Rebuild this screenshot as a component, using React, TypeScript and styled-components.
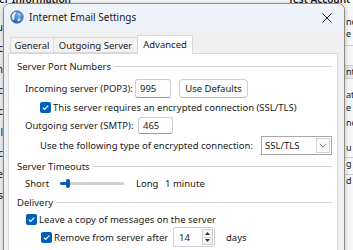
import React from "react";
import styled, { createGlobalStyle } from "styled-components";

const Global = createGlobalStyle`
  html, body { margin: 0; padding: 0; }
  body { width: 353px; height: 250px; overflow: hidden; background: #ffffff; }
  #root { width: 353px; height: 250px; }
  * { box-sizing: border-box; }
`;

const Desktop = styled.div`
  position: relative;
  width: 353px;
  height: 250px;
  overflow: hidden;
  background: #ffffff;
  font-family: "Noto Sans", "Open Sans", sans-serif;
  font-size: 9.5px;
  color: #1a1a1a;
`;

/* ---------- background window ---------- */
const BackWindow = styled.div`
  display: grid;
  grid-template-columns: 3px 1fr 8px;
  grid-template-rows: 4px 1fr;
  width: 100%;
  height: 100%;
`;

const BackHeader = styled.div`
  grid-column: 1 / -1;
  display: flex;
  align-items: flex-end;
  height: 4px;
  overflow: hidden;
  background: #ffffff;
`;

const BackTitle = styled.div<{ $w?: number; $right?: boolean }>`
  font-size: 10px;
  line-height: 10px;
  font-weight: 600;
  white-space: nowrap;
  overflow: hidden;
  flex: none;
  width: ${(p) => (p.$w ? `${p.$w}px` : "auto")};
  margin-left: ${(p) => (p.$right ? "auto" : "-1px")};
`;

const BackLeft = styled.div`
  display: flex;
  flex-direction: column;
  overflow: hidden;
  background: #f2f2f2;
  padding-top: 12px;
`;

const BackLeftWord = styled.div`
  display: flex;
  justify-content: flex-end;
  height: 21px;
  align-items: center;
  white-space: nowrap;
  font-size: 10px;
`;

const BackCenter = styled.div`
  background: #ffffff;
`;

const BackRight = styled.div`
  display: flex;
  flex-direction: column;
  overflow: hidden;
  background: #f7f7f7;
`;

const BackRightRow = styled.div<{ $h: number; $bg?: string; $line?: boolean }>`
  height: ${(p) => p.$h}px;
  flex: none;
  display: flex;
  align-items: center;
  padding-left: 1px;
  white-space: nowrap;
  font-size: 9px;
  line-height: 10px;
  overflow: hidden;
  background: ${(p) => p.$bg || "transparent"};
  border-top: ${(p) => (p.$line ? "1px solid #cfcfcf" : "none")};
`;

/* ---------- dialog ---------- */
const Dialog = styled.div`
  position: absolute;
  left: 3px;
  top: 3px;
  width: 342px;
  height: 262px;
  display: flex;
  flex-direction: column;
  background: #f0f0f0;
  border: 1px solid #8c8c8c;
  border-radius: 7px 7px 0 0;
  box-shadow: 0 0 5px rgba(0, 0, 0, 0.25);
  overflow: hidden;
`;

const TitleBar = styled.div`
  height: 26px;
  flex: none;
  display: flex;
  align-items: center;
  padding-left: 6px;
  background: #eef3f9;
`;

const TitleText = styled.div`
  margin-left: 5px;
  font-size: 10px;
  color: #1a1a1a;
  flex: 1;
`;

const CloseBox = styled.div`
  width: 30px;
  height: 26px;
  display: flex;
  align-items: center;
  justify-content: center;
  margin-right: 2px;
  margin-top: 1px;
`;

const Body = styled.div`
  flex: 1;
  display: flex;
  flex-direction: column;
  padding: 0 6px 0 4px;
`;

const TabRow = styled.div`
  height: 23px;
  flex: none;
  display: flex;
  align-items: flex-end;
  padding-left: 2px;
  position: relative;
  z-index: 1;
`;

const Tab = styled.div<{ $w: number; $active?: boolean }>`
  width: ${(p) => p.$w}px;
  height: ${(p) => (p.$active ? 19 : 16)}px;
  margin-bottom: ${(p) => (p.$active ? -1 : 0)}px;
  display: flex;
  align-items: center;
  justify-content: center;
  background: ${(p) => (p.$active ? "#ffffff" : "#f3f3f3")};
  border: 1px solid #d9d9d9;
  border-bottom: ${(p) => (p.$active ? "none" : "1px solid #d9d9d9")};
  margin-right: -1px;
  white-space: nowrap;
  padding-bottom: ${(p) => (p.$active ? 1 : 0)}px;
`;

const Panel = styled.div`
  flex: 1;
  display: flex;
  flex-direction: column;
  background: #ffffff;
  border: 1px solid #d9d9d9;
  padding: 5px 5px 0 8px;
`;

const GroupHeader = styled.div<{ $mt: number }>`
  display: flex;
  align-items: center;
  height: 14px;
  margin-top: ${(p) => p.$mt}px;
  white-space: nowrap;
`;

const GroupLine = styled.div`
  flex: 1;
  height: 1px;
  margin-left: 3px;
  background: #d3d3d3;
`;

const Row = styled.div<{ $indent: number; $h: number; $mt: number }>`
  display: flex;
  align-items: center;
  height: ${(p) => p.$h}px;
  margin-top: ${(p) => p.$mt}px;
  padding-left: ${(p) => p.$indent}px;
  white-space: nowrap;
  flex: none;
`;

const Label = styled.span<{ $w?: number; $ml?: number }>`
  flex: none;
  width: ${(p) => (p.$w ? `${p.$w}px` : "auto")};
  margin-left: ${(p) => p.$ml || 0}px;
`;

const TextBox = styled.div<{ $w: number; $h: number }>`
  flex: none;
  width: ${(p) => p.$w}px;
  height: ${(p) => p.$h}px;
  display: flex;
  align-items: center;
  padding-left: 4px;
  background: #ffffff;
  border: 1px solid #cdcdcd;
  border-bottom-color: #9a9a9a;
  border-radius: 3px;
`;

const Button = styled.div`
  flex: none;
  width: 69px;
  height: 19px;
  margin-left: 8px;
  display: flex;
  align-items: center;
  justify-content: center;
  background: #fdfdfd;
  border: 1px solid #d0d0d0;
  border-bottom-color: #bdbdbd;
  border-radius: 4px;
`;

const CheckBox = styled.div`
  flex: none;
  width: 11px;
  height: 11px;
  margin-right: 2px;
  border-radius: 2px;
  background: #005fb8;
  display: flex;
  align-items: center;
  justify-content: center;
`;

const Select = styled.div`
  flex: none;
  width: 71px;
  height: 19px;
  margin-left: auto;
  display: flex;
  align-items: center;
  padding: 0 1px 0 3px;
  background: #ffffff;
  border: 1px solid #a8a8a8;
`;

const SelectText = styled.span`
  flex: 1;
`;

const DropButton = styled.div`
  width: 14px;
  height: 15px;
  display: flex;
  align-items: center;
  justify-content: center;
  border: 1px solid #d4d4d4;
  background: #fafafa;
`;

const SliderTrack = styled.div`
  flex: none;
  width: 64px;
  height: 3px;
  border-radius: 2px;
  background: #d0d0d0;
  display: flex;
  align-items: center;
`;

const SliderFill = styled.div`
  width: 6px;
  height: 3px;
  border-radius: 2px 0 0 2px;
  background: #005fb8;
`;

const SliderThumb = styled.div`
  width: 4px;
  height: 9px;
  border-radius: 2px;
  background: #005fb8;
`;

const SpinBox = styled.div`
  flex: none;
  width: 42px;
  height: 20px;
  display: flex;
  align-items: center;
  padding: 0 1px 0 5px;
  background: #ffffff;
  border: 1px solid #d0d0d0;
  border-radius: 2px;
`;

const SpinValue = styled.span`
  flex: 1;
`;

const SpinButtons = styled.div`
  width: 11px;
  height: 16px;
  display: flex;
  flex-direction: column;
  border: 1px solid #cfcfcf;
  background: #f4f4f4;
`;

const SpinHalf = styled.div<{ $top?: boolean }>`
  flex: 1;
  display: flex;
  align-items: center;
  justify-content: center;
  border-top: ${(p) => (p.$top ? "none" : "1px solid #d8d8d8")};
`;

const Check = () => (
  <svg width="9" height="9" viewBox="0 0 9 9">
    <polyline points="1.8,4.6 3.6,6.4 7.3,2.6" fill="none" stroke="#ffffff" strokeWidth="1.2" />
  </svg>
);

const GlobeIcon = () => (
  <svg width="14" height="14" viewBox="0 0 14 14">
    <defs>
      <radialGradient id="g" cx="0.65" cy="0.35" r="0.7">
        <stop offset="0" stopColor="#6fb6ee" />
        <stop offset="1" stopColor="#1b5fae" />
      </radialGradient>
    </defs>
    <circle cx="7" cy="7" r="6.3" fill="url(#g)" stroke="#3f6f9f" strokeWidth="0.6" />
    <path d="M2.2 4.2 C3.4 2.6 5.2 1.8 6.6 2.2 C6 3.4 5.2 4 4.6 5.4 C4.2 6.6 4.8 8 4.2 9.6 C3.6 10.4 2.6 9.6 2 8.4 C1.4 7 1.6 5.4 2.2 4.2 Z" fill="#e9eef3" />
    <path d="M8.4 3.2 C9.4 3.4 10.2 4.2 10 5.2 C9.4 5.6 8.6 5 8.2 4.4 Z" fill="#d6e4ef" />
    <path d="M8.2 8.4 C9.2 8.2 10.6 8.6 10.8 9.6 C10 10.8 8.8 11.6 7.8 11.4 C7.6 10.4 7.6 9.2 8.2 8.4 Z" fill="#cfdeea" />
  </svg>
);

const CloseIcon = () => (
  <svg width="10" height="10" viewBox="0 0 10 10">
    <path d="M0.5 0.5 L9.5 9.5 M9.5 0.5 L0.5 9.5" stroke="#1f1f1f" strokeWidth="1" />
  </svg>
);

const Chevron = () => (
  <svg width="8" height="5" viewBox="0 0 8 5">
    <polyline points="0.8,0.8 4,4 7.2,0.8" fill="none" stroke="#707070" strokeWidth="0.9" />
  </svg>
);

const Arrow = ({ up }: { up?: boolean }) => (
  <svg width="5" height="3" viewBox="0 0 5 3">
    <polygon points={up ? "0,3 2.5,0 5,3" : "0,0 2.5,3 5,0"} fill="#333333" />
  </svg>
);

const leftWords = ["Nu", "Ac", "Un", "Ac", "Ac", "Ul", "Ac", "Re", "Os"];

const rightRows: { h: number; t?: string; bg?: string; line?: boolean }[] = [
  { h: 12 },
  { h: 12, t: "ne" },
  { h: 11, t: "e" },
  { h: 6 },
  { h: 20, line: true },
  { h: 13, t: "nt", bg: "#e6e6e6", line: true },
  { h: 10, line: true },
  { h: 13, t: "at" },
  { h: 13, t: "e" },
  { h: 3 },
  { h: 12, t: "ne" },
  { h: 13 },
  { h: 12, t: "u" },
  { h: 3 },
  { h: 12, t: "g", line: true },
  { h: 5 },
  { h: 12, t: "d", line: true },
];

export default function App() {
  return (
    <>
      <Global />
      <Desktop>
        <BackWindow>
          <BackHeader>
            <BackTitle>er Information</BackTitle>
            <BackTitle $right $w={65}>
              Test Account S
            </BackTitle>
          </BackHeader>
          <BackLeft>
            {leftWords.map((w, i) => (
              <BackLeftWord key={i}>{w}</BackLeftWord>
            ))}
          </BackLeft>
          <BackCenter />
          <BackRight>
            {rightRows.map((r, i) => (
              <BackRightRow key={i} $h={r.h} $bg={r.bg} $line={r.line}>
                {r.t}
              </BackRightRow>
            ))}
          </BackRight>
        </BackWindow>

        <Dialog>
          <TitleBar>
            <GlobeIcon />
            <TitleText>Internet Email Settings</TitleText>
            <CloseBox>
              <CloseIcon />
            </CloseBox>
          </TitleBar>
          <Body>
            <TabRow>
              <Tab $w={44}>General</Tab>
              <Tab $w={85}>Outgoing Server</Tab>
              <Tab $w={56} $active>
                Advanced
              </Tab>
            </TabRow>
            <Panel>
              <GroupHeader $mt={0}>
                Server Port Numbers
                <GroupLine />
              </GroupHeader>
              <Row $indent={8} $h={20} $mt={5}>
                <Label $w={110}>Incoming server (POP3):</Label>
                <TextBox $w={36} $h={19}>995</TextBox>
                <Button>Use Defaults</Button>
              </Row>
              <Row $indent={23} $h={12} $mt={3}>
                <CheckBox>
                  <Check />
                </CheckBox>
                <Label>This server requires an encrypted connection (SSL/TLS)</Label>
              </Row>
              <Row $indent={8} $h={18} $mt={3}>
                <Label $w={113}>Outgoing server (SMTP):</Label>
                <TextBox $w={35} $h={17}>465</TextBox>
              </Row>
              <Row $indent={23} $h={19} $mt={2}>
                <Label>Use the following type of encrypted connection:</Label>
                <Select>
                  <SelectText>SSL/TLS</SelectText>
                  <DropButton>
                    <Chevron />
                  </DropButton>
                </Select>
              </Row>
              <GroupHeader $mt={4}>
                Server Timeouts
                <GroupLine />
              </GroupHeader>
              <Row $indent={8} $h={14} $mt={3}>
                <Label $w={35}>Short</Label>
                <SliderTrack>
                  <SliderFill />
                  <SliderThumb />
                </SliderTrack>
                <Label $w={29} $ml={12}>
                  Long
                </Label>
                <Label>1 minute</Label>
              </Row>
              <GroupHeader $mt={5}>
                Delivery
                <GroupLine />
              </GroupHeader>
              <Row $indent={9} $h={14} $mt={3}>
                <CheckBox>
                  <Check />
                </CheckBox>
                <Label>Leave a copy of messages on the server</Label>
              </Row>
              <Row $indent={24} $h={20} $mt={1}>
                <CheckBox>
                  <Check />
                </CheckBox>
                <Label $w={119}>Remove from server after</Label>
                <SpinBox>
                  <SpinValue>14</SpinValue>
                  <SpinButtons>
                    <SpinHalf $top>
                      <Arrow up />
                    </SpinHalf>
                    <SpinHalf>
                      <Arrow />
                    </SpinHalf>
                  </SpinButtons>
                </SpinBox>
                <Label $ml={11}>days</Label>
              </Row>
            </Panel>
          </Body>
        </Dialog>
      </Desktop>
    </>
  );
}
